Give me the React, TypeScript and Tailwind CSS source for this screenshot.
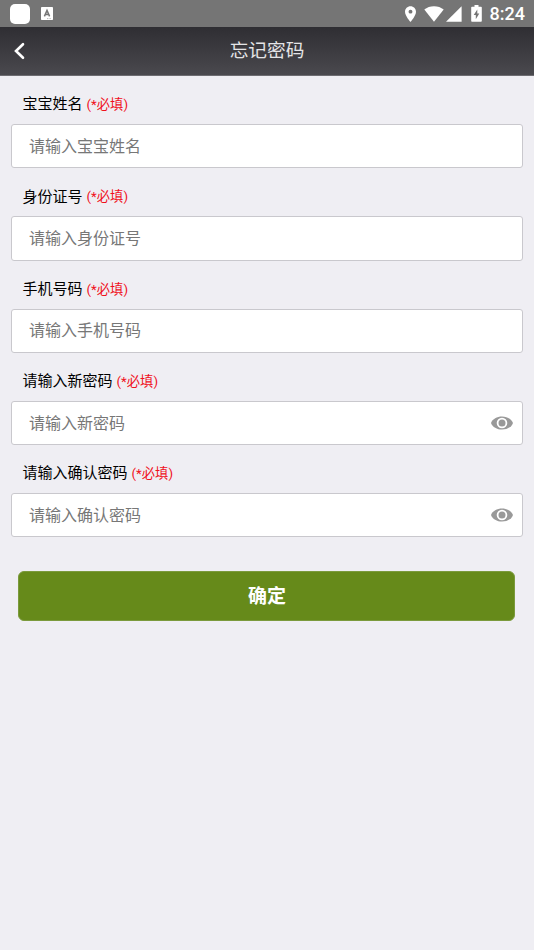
import { useState } from "react";

const fields = [
  { name: "babyName", label: "宝宝姓名", placeholder: "请输入宝宝姓名" },
  { name: "idCard", label: "身份证号", placeholder: "请输入身份证号" },
  { name: "phone", label: "手机号码", placeholder: "请输入手机号码" },
  { name: "password", label: "请输入新密码", placeholder: "请输入新密码", secret: true },
  { name: "confirm", label: "请输入确认密码", placeholder: "请输入确认密码", secret: true },
];

export default function App() {
  return (
    <div className="min-h-screen bg-[#efeef3] font-[Roboto,'Noto_Sans_CJK_SC',sans-serif]">
      <StatusBar />

      {/* Header */}
      <header className="grid h-[49px] grid-cols-[40px_1fr_40px] items-center border-b border-[#6d6c71] bg-gradient-to-b from-[#2f2e33] to-[#4a494e]">
        <button type="button" aria-label="返回" className="flex pl-[11.5px]">
          <svg width="14" height="18" viewBox="0 0 14 18" fill="none" stroke="#fff" strokeWidth="2.6">
            <path d="M11 2.2 4 9l7 6.800" strokeLinecap="round" />
          </svg>
        </button>
        <h1 className="text-center text-[18.7px] leading-7 text-[#e4e4e6]">忘记密码</h1>
      </header>

      {/* Form */}
      <form className="px-[11px]">
        {fields.map((field) => (
          <Field key={field.name} {...field} />
        ))}
        <button
          type="button"
          className="mx-[7px] mt-[33.5px] flex h-[50px] w-[497px] items-center justify-center rounded-md border border-[#7b9a3c] bg-[#668a1a] pt-0.5 pl-px text-[19px] leading-7 font-bold text-white"
        >
          确定
        </button>
      </form>
    </div>
  );
}

function StatusBar() {
  return (
    <div className="flex h-[27px] items-center bg-[#757575] pl-2.5 pr-[9px] text-white">
      <div className="size-5 rounded-[5px] bg-white" />
      <svg className="ml-[11px]" width="12" height="13" viewBox="0 0 12 13">
        <rect width="12" height="13" rx="0.8" fill="#fff" />
        <path d="M3.4 9.4 6 3.4l2.6 6M4.3 7.6h3.4" fill="none" stroke="#757575" strokeWidth="1.5" />
        <path d="M6 11.6h4" stroke="#757575" strokeWidth="0.5" strokeDasharray="1 0.6" />
      </svg>
      <svg className="ml-auto" width="11" height="16" viewBox="5 2 14 20" fill="#fff">
        <path d="M12 2C8.1 2 5 5.1 5 9c0 5.3 7 13 7 13s7-7.7 7-13c0-3.9-3.1-7-7-7zm0 9.5a2.5 2.5 0 1 1 0-5 2.5 2.5 0 0 1 0 5z" />
      </svg>
      <svg className="ml-2" width="20" height="16" viewBox="0 0 20 16" fill="#fff">
        <path d="M10 15.7.3 3.6C3 1.5 6.3.3 10 .3s7 1.2 9.7 3.3z" />
      </svg>
      <svg className="ml-0.5" width="16" height="16" viewBox="0 0 16 16" fill="#fff">
        <path d="M0 15.7 15.6.2v15.5z" />
      </svg>
      <svg className="ml-[9px]" width="11" height="17" viewBox="0 0 11 17">
        <path d="M3.5 0h4v1.8H10q.8 0 .8.8V16q0 .8-.8.8H1q-.8 0-.8-.8V2.6q0-.8.8-.8h2.5z" fill="#fff" />
        <path d="M6.3 4.6 2.7 10h2.1v4.2l3.5-5.6h-2z" fill="#757575" />
      </svg>
      <span className="ml-2 text-[18px] leading-[27px] font-medium">8:24</span>
    </div>
  );
}

type FieldProps = {
  name: string;
  label: string;
  placeholder: string;
  secret?: boolean;
};

function Field({ name, label, placeholder, secret }: FieldProps) {
  const [visible, setVisible] = useState(false);

  return (
    <div>
      <label htmlFor={name} className="flex h-[48px] items-center gap-1 pt-[9px] pl-[11.5px] text-[15px] text-black">
        {label}
        <span className="pt-px text-[13.3px] text-[#f0101c]">(*必填)</span>
      </label>
      <div className="flex h-[44.3px] items-center rounded-[3px] border border-[#c9c8cd] bg-white pr-[9.5px] pl-[17px]">
        <input
          id={name}
          type={secret && !visible ? "password" : "text"}
          placeholder={placeholder}
          className="min-w-0 flex-1 pt-px text-base text-black outline-none placeholder:text-[#777]"
        />
        {secret && (
          <button type="button" aria-label="显示密码" className="pb-px" onClick={() => setVisible(!visible)}>
            <svg width="22" height="14" viewBox="0 0 22 14">
              <path d="M0 7C1.5 2.8 6 .4 11 .4S20.500 2.800 22 7c-1.500 4.200-6 6.600-11 6.600S1.500 11.200 0 7z" fill="#999" />
              <circle cx="11" cy="7" r="4.4" fill="#999" stroke="#fff" strokeWidth="1.8" />
            </svg>
          </button>
        )}
      </div>
    </div>
  );
}
